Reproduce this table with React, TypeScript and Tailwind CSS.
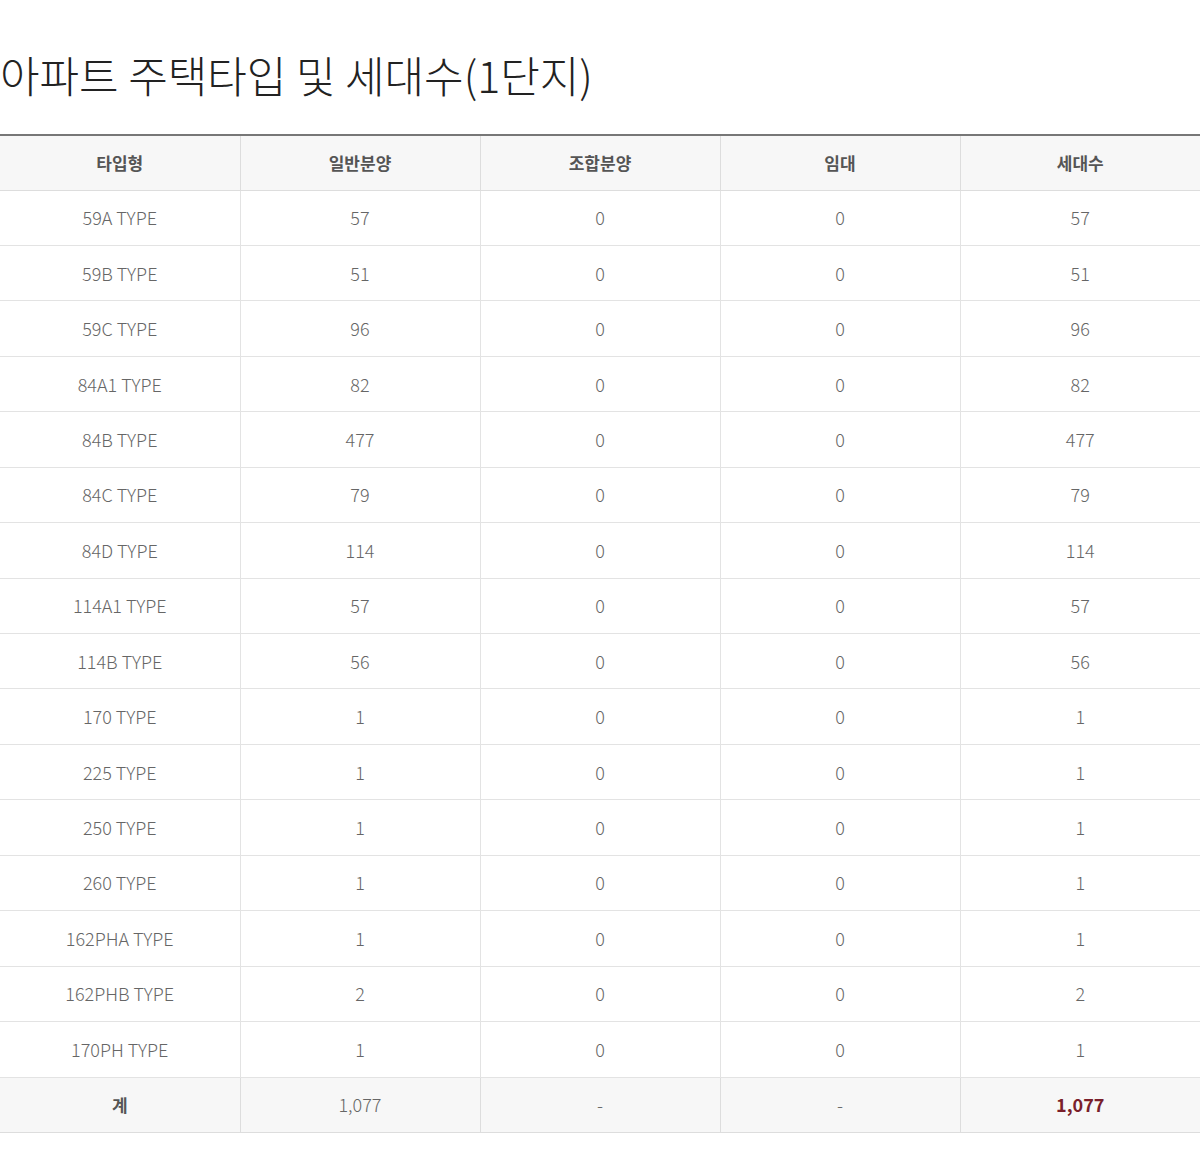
import React from "react";

const rows: [string, string, string, string, string][] = [
  ["59A TYPE", "57", "0", "0", "57"],
  ["59B TYPE", "51", "0", "0", "51"],
  ["59C TYPE", "96", "0", "0", "96"],
  ["84A1 TYPE", "82", "0", "0", "82"],
  ["84B TYPE", "477", "0", "0", "477"],
  ["84C TYPE", "79", "0", "0", "79"],
  ["84D TYPE", "114", "0", "0", "114"],
  ["114A1 TYPE", "57", "0", "0", "57"],
  ["114B TYPE", "56", "0", "0", "56"],
  ["170 TYPE", "1", "0", "0", "1"],
  ["225 TYPE", "1", "0", "0", "1"],
  ["250 TYPE", "1", "0", "0", "1"],
  ["260 TYPE", "1", "0", "0", "1"],
  ["162PHA TYPE", "1", "0", "0", "1"],
  ["162PHB TYPE", "2", "0", "0", "2"],
  ["170PH TYPE", "1", "0", "0", "1"],
];

const font = { fontFamily: '"Noto Sans CJK KR", "Noto Sans", sans-serif' };

export default function App() {
  return (
    <div className="w-[1200px] bg-white" style={font}>
      <h1 className="pt-[44px] h-[134px] text-[43px] font-light leading-[60px] text-[#222]">
        아파트 주택타입 및 세대수(1단지)
      </h1>
      <table className="w-full border-collapse table-fixed border-t-2 border-t-[#777]">
        <thead>
          <tr className="h-[55px] bg-[#f7f7f7]">
            {["타입형", "일반분양", "조합분양", "임대", "세대수"].map((h, i) => (
              <th
                key={h}
                className={`text-[17px] font-bold text-[#555] border-b border-[#ddd] ${i > 0 ? "border-l" : ""}`}
              >
                {h}
              </th>
            ))}
          </tr>
        </thead>
        <tbody>
          {rows.map((r) => (
            <tr key={r[0]} className="h-[55.45px]">
              {r.map((c, i) => (
                <td
                  key={i}
                  className={`text-center text-[18px] font-light text-[#666] border-b border-[#e3e3e3] ${i > 0 ? "border-l border-l-[#e3e3e3]" : ""}`}
                >
                  {c}
                </td>
              ))}
            </tr>
          ))}
          <tr className="h-[55px] bg-[#f7f7f7]">
            <td className="text-center text-[17px] font-bold text-[#555] border-b border-[#ddd]">계</td>
            <td className="text-center text-[18px] font-light text-[#666] border-b border-l border-[#ddd]">1,077</td>
            <td className="text-center text-[18px] font-light text-[#666] border-b border-l border-[#ddd]">-</td>
            <td className="text-center text-[18px] font-light text-[#666] border-b border-l border-[#ddd]">-</td>
            <td className="text-center text-[18px] font-bold text-[#7a1f2b] border-b border-l border-[#ddd]">1,077</td>
          </tr>
        </tbody>
      </table>
    </div>
  );
}
